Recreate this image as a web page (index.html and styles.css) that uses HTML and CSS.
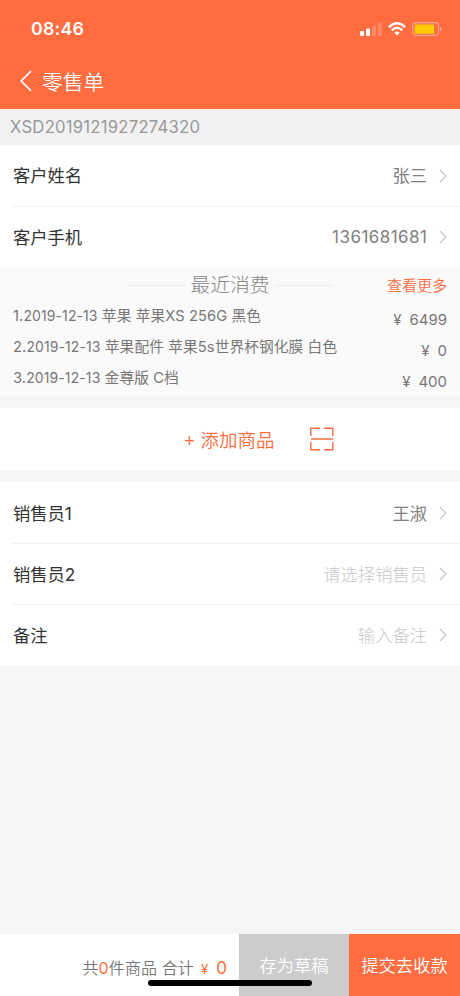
FILE: index.html
```html
<!DOCTYPE html>
<html lang="zh-CN">
<head>
<meta charset="utf-8">
<meta name="viewport" content="width=device-width, initial-scale=1">
<title>零售单</title>
<link rel="stylesheet" href="styles.css">
</head>
<body>
<div class="app">
  <header class="header">
    <div class="status">
      <span class="time">08:46</span>
      <div class="status-icons">
        <svg class="signal" width="22" height="14" viewBox="0 0 22 14" fill="#fff"><rect x="0" y="9" width="4" height="5" rx="1"/><rect x="6" y="6.5" width="4" height="7.5" rx="1"/><rect x="12" y="3.5" width="4" height="10.5" rx="1" opacity=".2"/><rect x="17.7" y="0.5" width="4" height="13.5" rx="1" opacity=".2"/></svg>
        <svg class="wifi" width="18" height="14" viewBox="0 0 18 14" fill="none" stroke="#fff" stroke-width="2.5"><path d="M.9 5.1Q9-2.6 17.1 5.1"/><path d="M3.8 8.3Q9 3.3 14.2 8.3"/><path d="M6.3 10.7Q9 8.2 11.7 10.7L9 13.5Z" fill="#fff" stroke="none"/></svg>
        <svg class="battery" width="31" height="14" viewBox="0 0 31 14"><rect x=".6" y=".6" width="26" height="12.8" rx="3.5" fill="none" stroke="#fff" stroke-opacity=".42" stroke-width="1.1"/><rect x="2.6" y="2.4" width="19.6" height="9.4" rx="1.4" fill="#ffcc06"/><path d="M28.2 4.7Q31.2 7 28.2 9.3Z" fill="#fff" opacity=".5"/></svg>
      </div>
    </div>
    <div class="nav">
      <svg width="14" height="22" viewBox="0 0 14 22" fill="none" stroke="#fff" stroke-width="1.7"><path d="M12 1.2 2.2 11 12 20.8"/></svg>
      <h1 class="title">零售单</h1>
    </div>
  </header>
  <div class="order-no">XSD2019121927274320</div>

  <section class="list">
    <div class="row"><span class="label">客户姓名</span><span class="value">张三</span><svg class="chevron" viewBox="0 0 8 14"><path d="M1 1 7 7 1 13"/></svg></div>
    <div class="row"><span class="label">客户手机</span><span class="value phone">1361681681</span><svg class="chevron" viewBox="0 0 8 14"><path d="M1 1 7 7 1 13"/></svg></div>
  </section>

  <section class="recent">
    <div class="recent-head"><i class="rule"></i><h2 class="recent-title">最近消费</h2><i class="rule"></i><span class="more">查看更多</span></div>
    <div class="purchase"><span class="desc">1.<span class="date">2019-12-13</span> 苹果 苹果XS 256G 黑色</span><span class="price"><span class="yen">¥</span>6499</span></div>
    <div class="purchase"><span class="desc">2.<span class="date">2019-12-13</span> 苹果配件 苹果5s世界杯钢化膜 白色</span><span class="price"><span class="yen">¥</span>0</span></div>
    <div class="purchase"><span class="desc">3.<span class="date">2019-12-13</span> 金尊版 C档</span><span class="price"><span class="yen">¥</span>400</span></div>
  </section>

  <section class="add">
    <span class="add-text"><span class="plus">+</span>添加商品</span>
    <svg class="scan" width="24" height="24" viewBox="0 0 24 24" fill="none" stroke="#ff6c40" stroke-width="1.4"><path d="M.8 9V1.2H10M14 1.2h8.8V9M.8 15v7.8H10M14 22.8h8.8V15M1 12h22"/></svg>
  </section>

  <section class="list staff">
    <div class="row"><span class="label">销售员1</span><span class="value">王淑</span><svg class="chevron" viewBox="0 0 8 14"><path d="M1 1 7 7 1 13"/></svg></div>
    <div class="row"><span class="label">销售员2</span><span class="value placeholder">请选择销售员</span><svg class="chevron" viewBox="0 0 8 14"><path d="M1 1 7 7 1 13"/></svg></div>
    <div class="row"><span class="label">备注</span><span class="value placeholder">输入备注</span><svg class="chevron" viewBox="0 0 8 14"><path d="M1 1 7 7 1 13"/></svg></div>
  </section>

  <footer class="footer">
    <div class="summary"><span>共<b class="count">0</b>件商品 合计</span><span class="sum-yen">¥</span><span class="total">0</span></div>
    <div class="button draft">存为草稿</div>
    <div class="button submit">提交去收款</div>
    <div class="home-bar"></div>
  </footer>
</div>
</body>
</html>
```
FILE: styles.css
```css
* { box-sizing: border-box; }
body {
  margin: 0;
  background: #f5f5f5;
  color: #333;
  font-family: Inter, "Noto Sans CJK SC", sans-serif;
  font-weight: 400;
}
.app { display: flex; flex-direction: column; width: 460px; height: 996px; overflow: hidden; }
.header { height: 109px; background: #ff6c40; color: #fff; }
.status { display: flex; justify-content: space-between; align-items: center; height: 57px; padding: 0 17px 0 31px; }
.time { font-size: 17.8px; font-weight: 600; letter-spacing: 0.2px; }
.status-icons { display: flex; align-items: center; }
.wifi { margin-left: 6px; }
.battery { margin-left: 6px; }
.nav { display: flex; align-items: center; height: 48px; padding-left: 19px; }
.title { margin: 3px 0 0 9px; font-size: 20.7px; font-weight: 350; line-height: 28px; }
.order-no {
  height: 36px; padding-left: 10px; background: #f1f1f1; color: #999;
  font-size: 16.7px; line-height: 36px; letter-spacing: 0.22px;
}
.list { background: #fff; }
.row { position: relative; display: flex; align-items: center; height: 61px; padding: 0 13px; font-size: 17.3px; }
.row:last-child { height: 62px; }
.row + .row::before { content: ""; position: absolute; top: 0; left: 12px; right: 0; height: 1px; background: #f1f1f1; }
.label, .value { padding-bottom: 2px; }
.staff .label, .staff .value { padding-bottom: 0; }
.staff .row:last-child .label, .staff .row:last-child .value { padding-bottom: 2px; }
.label { flex: 1; }
.value { color: #808080; }
.placeholder { color: #c8c8c8; font-weight: 300; }
.value.phone { padding-bottom: 0; font-size: 17px; letter-spacing: 0.45px; margin-right: -0.45px; }
.chevron { width: 8px; height: 14px; margin-left: 12px; fill: none; stroke: #c4c4c4; stroke-width: 1.1; }
.recent { height: 128px; background: #fafafa; color: #777; }
.recent-head { position: relative; display: flex; align-items: center; justify-content: center; height: 34px; gap: 5px; }
.rule { width: 58px; height: 1px; background: #ececec; }
.recent-title { margin: 0; font-size: 19.8px; line-height: 28px; font-weight: 300; color: #888; }
.more { position: absolute; right: 13px; top: 7px; font-size: 15px; line-height: 22px; color: #ff6c40; font-weight: 350; }
.purchase { display: flex; justify-content: space-between; height: 31px; padding: 0 13px; font-size: 14.7px; line-height: 28px; letter-spacing: 0.1px; white-space: nowrap; }
.date { font-size: 14px; }
.price { padding-top: 4px; font-size: 15px; letter-spacing: 0; }
.yen { margin-right: 8px; }
.add { display: flex; align-items: center; height: 62px; margin: 12px 0; padding-left: 184px; background: #fff; color: #ff6c40; }
.add-text { font-size: 18.5px; font-weight: 350; }
.plus { display: inline-block; width: 16.5px; font-family: "Liberation Sans", sans-serif; }
.scan { margin-left: 35px; }
.footer { position: relative; display: flex; height: 62px; margin-top: auto; background: #fff; }
.summary { display: flex; align-items: baseline; justify-content: flex-end; width: 239px; padding: 22px 12px 0 0; color: #777; font-size: 16px; font-weight: 350; line-height: 24px; letter-spacing: 0.1px; }
.count, .sum-yen, .total { color: #ff6c40; font-weight: 400; }
.sum-yen { margin-left: 7px; font-size: 13px; }
.total { margin-left: 8px; font-size: 17px; }
.button { height: 62px; text-align: center; color: #fff; font-size: 17.3px; line-height: 63px; font-weight: 350; }
.draft { width: 110px; background: #ccc; }
.submit { width: 111px; background: #ff6c40; }
.home-bar { position: absolute; left: 148px; bottom: 10px; width: 164px; height: 6px; border-radius: 3px; background: #000; }
```
